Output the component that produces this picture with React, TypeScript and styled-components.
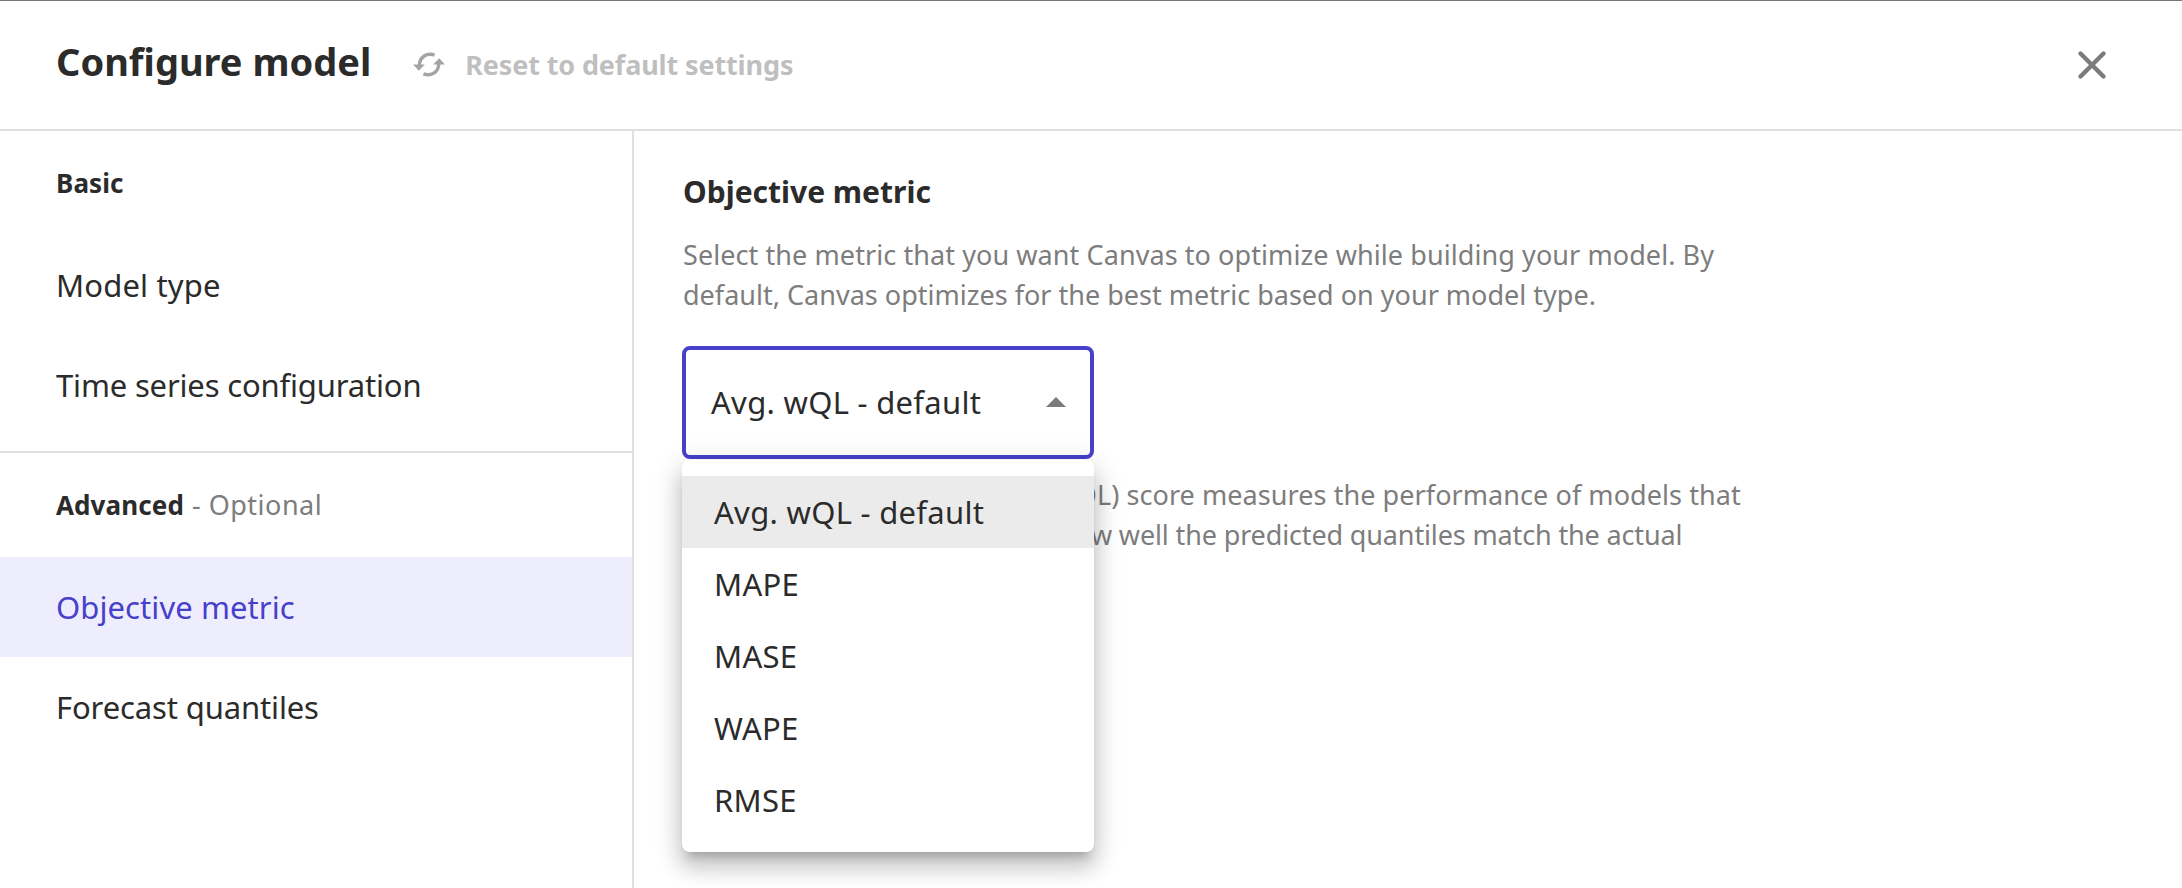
import React from "react";
import styled, { createGlobalStyle, css } from "styled-components";

const color = {
  text: "#2b2b2b",
  muted: "#7d7d7d",
  disabled: "#bfbfbf",
  line: "#e0e0e0",
  accent: "#4740cb",
  accentSoft: "#eeedfd",
  hover: "#ebebeb",
};

const GlobalStyle = createGlobalStyle`
  * { box-sizing: border-box; }
  body {
    margin: 0;
    background: #fff;
    color: ${color.text};
    font-family: "Noto Sans", "Open Sans", sans-serif;
    overflow: hidden;
  }
  h1, h2, h3, p, ul { margin: 0; padding: 0; }
  button { border: 0; background: none; padding: 0; font-family: inherit; color: inherit; }
`;

const Dialog = styled.div`
  display: flex;
  flex-direction: column;
  height: 888px;
  border-top: 1px solid #777;
  background: #fff;
`;

const Header = styled.header`
  display: flex;
  align-items: center;
  flex: none;
  height: 130px;
  padding: 0 75px 0 56px;
  border-bottom: 2px solid ${color.line};
`;

const Title = styled.h1`
  padding-bottom: 9px;
  font-size: 38px;
  line-height: 52px;
  font-weight: 700;
`;

const ResetButton = styled.button`
  display: flex;
  align-items: center;
  gap: 20px;
  margin-left: 42px;
  color: ${color.disabled};
  font-size: 27px;
  line-height: 40px;
  font-weight: 700;
  letter-spacing: -0.13px;
`;

const CloseButton = styled.button`
  display: flex;
  margin-left: auto;
`;

const Body = styled.div`
  display: flex;
  flex: 1;
  min-height: 0;
`;

const Sidebar = styled.nav`
  flex: none;
  width: 634px;
  border-right: 2px solid ${color.line};
`;

const Section = styled.section<{ $divided?: boolean }>`
  ${(p) =>
    p.$divided &&
    css`
      padding-bottom: 16px;
      border-bottom: 2px solid ${color.line};
    `}
`;

const SectionTitle = styled.h3`
  padding-left: 56px;
  font-size: 26px;
  line-height: 104px;
  font-weight: 700;
  letter-spacing: 0.1px;
`;

const Optional = styled.span`
  margin-left: 8px;
  color: ${color.muted};
  font-size: 27px;
  font-weight: 400;
  letter-spacing: 0.5px;
`;

const NavItem = styled.a<{ $active?: boolean; $spacing: number }>`
  display: block;
  height: 100px;
  padding-left: 56px;
  font-size: 31px;
  line-height: 100px;
  letter-spacing: ${(p) => p.$spacing}px;
  color: ${(p) => (p.$active ? color.accent : color.text)};
  background: ${(p) => (p.$active ? color.accentSoft : "transparent")};
`;

const Content = styled.main`
  flex: 1;
  padding: 41px 48px 0 49px;
`;

const Heading = styled.h2`
  font-size: 30px;
  line-height: 40px;
  font-weight: 700;
`;

const Description = styled.p<{ $top: number }>`
  margin-top: ${(p) => p.$top}px;
  color: ${color.muted};
  font-size: 27px;
  line-height: 40px;
  white-space: nowrap;
`;

const Line = styled.span<{ $spacing: number }>`
  display: block;
  letter-spacing: ${(p) => p.$spacing}px;
`;

const SelectWrap = styled.div`
  position: relative;
  width: 412px;
  margin: 31px 0 0 -1px;
`;

const SelectField = styled.button`
  display: flex;
  align-items: center;
  justify-content: space-between;
  width: 100%;
  height: 113px;
  padding: 0 24px 1px 25px;
  border: 4px solid ${color.accent};
  border-radius: 8px;
  font-size: 31px;
  line-height: 40px;
  letter-spacing: 0.3px;
`;

const Menu = styled.ul`
  position: absolute;
  top: 114px;
  left: 0;
  width: 100%;
  padding: 16px 0;
  border-radius: 8px;
  background: #fff;
  list-style: none;
  box-shadow: 0 10px 10px -6px rgba(0, 0, 0, 0.2), 0 16px 20px 2px rgba(0, 0, 0, 0.14),
    0 6px 28px 4px rgba(0, 0, 0, 0.12);
`;

const Option = styled.li<{ $selected: boolean }>`
  height: 72px;
  padding-left: 32px;
  font-size: 31px;
  line-height: 72px;
  letter-spacing: 0.3px;
  background: ${(p) => (p.$selected ? color.hover : "transparent")};
`;

const RefreshIcon = () => (
  <svg width="32" height="26" viewBox="0 0 32 26" fill="none">
    <path d="M21.6 3.1C14 .4 6.6 5 6.4 13" stroke="#a3a3a3" strokeWidth="3.4" />
    <path d="M0 12.4h11.8L5.900 18.800z" fill="#a3a3a3" />
    <path d="M10.400 21.900C18 24.800 25.600 20.200 25.800 12" stroke="#a3a3a3" strokeWidth="3.4" />
    <path d="M20.200 12.600H32L26.100 6.200z" fill="#a3a3a3" />
  </svg>
);

const CloseIcon = () => (
  <svg width="30" height="30" viewBox="0 0 30 30" fill="none">
    <path d="M3.500 3.500l23 23M26.500 3.500l-23 23" stroke="#7b7b7b" strokeWidth="4.400" strokeLinecap="round" />
  </svg>
);

const ArrowUp = () => (
  <svg width="20" height="10" viewBox="0 0 20 10">
    <path d="M0 10L10 0l10 10z" fill="#7b7b7b" />
  </svg>
);

const options = ["Avg. wQL - default", "MAPE", "MASE", "WAPE", "RMSE"];

export default function App() {
  return (
    <>
      <GlobalStyle />
      <Dialog>
        <Header>
          <Title>Configure model</Title>
          <ResetButton>
            <RefreshIcon />
            Reset to default settings
          </ResetButton>
          <CloseButton aria-label="Close">
            <CloseIcon />
          </CloseButton>
        </Header>
        <Body>
          <Sidebar>
            <Section $divided>
              <SectionTitle>Basic</SectionTitle>
              <NavItem $spacing={0.15}>Model type</NavItem>
              <NavItem $spacing={-0.17}>Time series configuration</NavItem>
            </Section>
            <Section>
              <SectionTitle>
                Advanced<Optional>- Optional</Optional>
              </SectionTitle>
              <NavItem $active $spacing={0.08}>
                Objective metric
              </NavItem>
              <NavItem $spacing={-0.13}>Forecast quantiles</NavItem>
            </Section>
          </Sidebar>
          <Content>
            <Heading>Objective metric</Heading>
            <Description $top={23}>
              <Line $spacing={0.08}>
                Select the metric that you want Canvas to optimize while building your model. By
              </Line>
              <Line $spacing={0.01}>
                default, Canvas optimizes for the best metric based on your model type.
              </Line>
            </Description>
            <SelectWrap>
              <SelectField>
                Avg. wQL - default
                <ArrowUp />
              </SelectField>
              <Menu>
                {options.map((name, i) => (
                  <Option key={name} $selected={i === 0}>
                    {name}
                  </Option>
                ))}
              </Menu>
            </SelectWrap>
            <Description $top={16}>
              <Line $spacing={0.07}>
                The Weighted Quantile Loss (wQL) score measures the performance of models that
              </Line>
              <Line $spacing={-0.14}>
                predict quantiles. It evaluates how well the predicted quantiles match the actual
              </Line>
              <Line $spacing={0}>values.</Line>
            </Description>
          </Content>
        </Body>
      </Dialog>
    </>
  );
}
